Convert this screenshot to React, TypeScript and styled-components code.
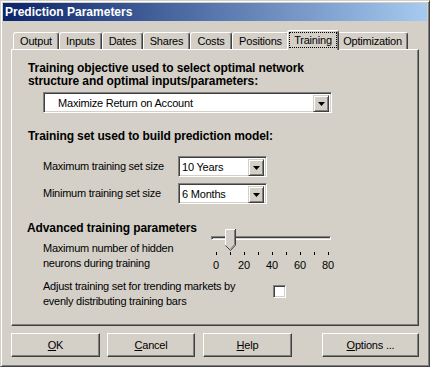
import React from 'react'
import styled, { createGlobalStyle } from 'styled-components'

const Global = createGlobalStyle`
  html, body {
    margin: 0;
    padding: 0;
    background: #D4D0C8;
  }
  body {
    font-family: "Liberation Sans", Arial, sans-serif;
    font-size: 11px;
    color: #000;
  }
`

const TABS = [
  { label: 'Output', w: 46 },
  { label: 'Inputs', w: 43 },
  { label: 'Dates', w: 41 },
  { label: 'Shares', w: 47 },
  { label: 'Costs', w: 42 },
  { label: 'Positions', w: 57 },
  { label: 'Training', w: 48, active: true },
  { label: 'Optimization', w: 71 },
]

const App: React.FC = () => {
  return (
    <>
      <Global />
      <StyledWindow>
        <StyledTitleBar>Prediction Parameters</StyledTitleBar>
        <StyledBody>
          <StyledTabStrip>
            {TABS.map((tab) =>
              tab.active ? (
                <StyledActiveTab key={tab.label} $w={tab.w}>
                  <StyledFocus>{tab.label}</StyledFocus>
                </StyledActiveTab>
              ) : (
                <StyledTab key={tab.label} $w={tab.w}>
                  {tab.label}
                </StyledTab>
              ),
            )}
          </StyledTabStrip>
          <StyledPanel>
            <StyledHeading>
              Training objective used to select optimal network
              <br />
              structure and optimal inputs/parameters:
            </StyledHeading>
            <StyledWideCombo>
              <Dropdown width={289} indent={12} text="Maximize Return on Account" />
            </StyledWideCombo>

            <StyledHeading $mt={17}>Training set used to build prediction model:</StyledHeading>
            <StyledSizeRow $mt={13}>
              <StyledLabel $w={135}>Maximum training set size</StyledLabel>
              <Dropdown width={89} indent={1} text="10 Years" />
            </StyledSizeRow>
            <StyledSizeRow $mt={6}>
              <StyledLabel $w={135}>Minimum training set size</StyledLabel>
              <Dropdown width={89} indent={1} text="6 Months" />
            </StyledSizeRow>

            <StyledAdvanced>
              <StyledAdvancedLeft>
                <StyledHeading $ml={-1}>Advanced training parameters</StyledHeading>
                <StyledMultiLabel>
                  Maximum number of hidden
                  <br />
                  neurons during training
                </StyledMultiLabel>
              </StyledAdvancedLeft>
              <Slider value={10} />
            </StyledAdvanced>

            <StyledCheckRow>
              <StyledCheckLabel>
                Adjust training set for trending markets by
                <br />
                evenly distributing training bars
              </StyledCheckLabel>
              <StyledCheckbox />
            </StyledCheckRow>
          </StyledPanel>

          <StyledButtonRow>
            <StyledButton $w={89}>
              <u>O</u>K
            </StyledButton>
            <StyledButton $w={88} $ml={7}>
              <u>C</u>ancel
            </StyledButton>
            <StyledButton $w={89} $ml={8}>
              <u>H</u>elp
            </StyledButton>
            <StyledButton $w={97} $ml={30}>
              <u>O</u>ptions ...
            </StyledButton>
          </StyledButtonRow>
        </StyledBody>
      </StyledWindow>
    </>
  )
}

interface DropdownProps {
  width: number
  indent: number
  text: string
}

const Dropdown: React.FC<DropdownProps> = ({ width, indent, text }) => (
  <StyledCombo $w={width}>
    <StyledComboText $indent={indent}>{text}</StyledComboText>
    <StyledComboButton>
      <svg width="7" height="4" viewBox="0 0 7 4">
        <polygon points="0,0 7,0 3.5,4" fill="#000" />
      </svg>
    </StyledComboButton>
  </StyledCombo>
)

const Slider: React.FC<{ value: number }> = ({ value }) => {
  // 0..80 across the tick span
  const thumbLeft = 14 + (value / 80) * 112 - 5
  return (
    <StyledSlider>
      <StyledTrackArea>
        <StyledTrack />
        <StyledThumb style={{ left: thumbLeft }}>
          <svg width="11" height="22" viewBox="0 0 11 22">
            <polygon points="0.5,0.5 10.5,0.5 10.5,16 5.5,21.5 0.5,16" fill="#D4D0C8" />
            <polyline points="0.5,16 0.5,0.5 10,0.5" fill="none" stroke="#fff" strokeWidth="1" />
            <polyline points="10.5,0 10.5,16 5.5,21.5 0.5,16.5" fill="none" stroke="#404040" strokeWidth="1" />
            <polyline points="9.5,1 9.5,15.6 5.5,20" fill="none" stroke="#808080" strokeWidth="1" />
          </svg>
        </StyledThumb>
      </StyledTrackArea>
      <StyledTicks>
        {Array.from({ length: 9 }).map((_, i) => (
          <StyledTick key={i} />
        ))}
      </StyledTicks>
      <StyledTickLabels>
        {[0, 20, 40, 60, 80].map((n) => (
          <StyledTickLabel key={n}>{n}</StyledTickLabel>
        ))}
      </StyledTickLabels>
    </StyledSlider>
  )
}

const StyledWindow = styled.div`
  width: 430px;
  height: 367px;
  box-sizing: border-box;
  display: flex;
  flex-direction: column;
  background: #D4D0C8;
  border: 1px solid;
  border-color: #D4D0C8 #404040 #404040 #D4D0C8;
  box-shadow: inset 1px 1px #fff, inset -1px -1px #808080;
  padding: 2px;
`

const StyledTitleBar = styled.div`
  height: 18px;
  flex: none;
  display: flex;
  align-items: center;
  padding-left: 2px;
  background: linear-gradient(to right, #0A246A, #A6CAF0);
  color: #fff;
  font-weight: bold;
  font-size: 12px;
`

const StyledBody = styled.div`
  flex: 1;
  display: flex;
  flex-direction: column;
  padding: 9px 8px 7px;
`

const StyledTabStrip = styled.div`
  display: flex;
  align-items: flex-end;
  height: 19px;
  padding-left: 2px;
`

const StyledTab = styled.div<{ $w: number }>`
  width: ${(p) => p.$w}px;
  height: 17px;
  box-sizing: border-box;
  border-top: 1px solid #fff;
  border-left: 1px solid #fff;
  border-right: 1px solid #404040;
  border-radius: 3px 3px 0 0;
  box-shadow: inset -1px 0 #808080;
  padding-top: 2px;
  line-height: 13px;
  text-align: center;
  letter-spacing: -0.2px;
`

const StyledActiveTab = styled.div<{ $w: number }>`
  width: ${(p) => p.$w + 4}px;
  height: 20px;
  box-sizing: border-box;
  margin: 0 -2px -1px;
  position: relative;
  z-index: 1;
  background: #D4D0C8;
  border-top: 1px solid #fff;
  border-left: 1px solid #fff;
  border-right: 1px solid #404040;
  border-radius: 3px 3px 0 0;
  box-shadow: inset -1px 0 #808080;
  padding: 1px 1px 0 1px;
`

const StyledFocus = styled.div`
  height: 16px;
  box-sizing: border-box;
  border: 1px dotted #000;
  padding-top: 1px;
  line-height: 13px;
  text-align: center;
  letter-spacing: -0.2px;
`

const StyledPanel = styled.div`
  height: 277px;
  box-sizing: border-box;
  border: 1px solid;
  border-color: #fff #404040 #404040 #fff;
  box-shadow: inset -1px -1px #808080;
  padding: 12px 0 0 16px;
  display: flex;
  flex-direction: column;
  align-items: flex-start;
`

const StyledHeading = styled.div<{ $mt?: number; $ml?: number }>`
  margin-top: ${(p) => p.$mt || 0}px;
  margin-left: ${(p) => p.$ml || 0}px;
  font-size: 12px;
  font-weight: bold;
  line-height: 13px;
  letter-spacing: -0.1px;
  white-space: nowrap;
`

const StyledWideCombo = styled.div`
  margin: 4px 0 0 15px;
`

const StyledCombo = styled.div<{ $w: number }>`
  width: ${(p) => p.$w}px;
  height: 21px;
  box-sizing: border-box;
  display: flex;
  background: #fff;
  border: 1px solid;
  border-color: #808080 #fff #fff #808080;
  box-shadow: inset 1px 1px #404040, inset -1px -1px #D4D0C8;
  padding: 2px 2px 1px 2px;
`

const StyledComboText = styled.div<{ $indent: number }>`
  flex: 1;
  padding-left: ${(p) => p.$indent}px;
  font-size: 11px;
  line-height: 17px;
  letter-spacing: -0.2px;
  white-space: nowrap;
  overflow: hidden;
`

const StyledComboButton = styled.div`
  width: 16px;
  height: 17px;
  box-sizing: border-box;
  display: flex;
  align-items: center;
  justify-content: center;
  background: #D4D0C8;
  border: 1px solid;
  border-color: #D4D0C8 #404040 #404040 #D4D0C8;
  box-shadow: inset 1px 1px #fff, inset -1px -1px #808080;
`

const StyledSizeRow = styled.div<{ $mt: number }>`
  display: flex;
  align-items: center;
  margin-top: ${(p) => p.$mt}px;
  margin-left: 15px;
`

const StyledLabel = styled.div<{ $w: number }>`
  width: ${(p) => p.$w}px;
  font-size: 11px;
  line-height: 15px;
  letter-spacing: -0.25px;
`

const StyledAdvanced = styled.div`
  display: flex;
  margin-top: 18px;
`

const StyledAdvancedLeft = styled.div`
  width: 174px;
  display: flex;
  flex-direction: column;
`

const StyledMultiLabel = styled.div`
  margin: 6px 0 0 15px;
  font-size: 11px;
  line-height: 15px;
  letter-spacing: -0.25px;
  white-space: nowrap;
`

const StyledSlider = styled.div`
  width: 140px;
  padding-top: 7px;
  display: flex;
  flex-direction: column;
`

const StyledTrackArea = styled.div`
  position: relative;
  height: 22px;
  padding-top: 7px;
  box-sizing: border-box;
`

const StyledTrack = styled.div`
  margin-left: 9px;
  width: 120px;
  height: 4px;
  box-sizing: border-box;
  border: 1px solid;
  border-color: #808080 #fff #fff #808080;
  box-shadow: inset 1px 1px #404040, inset -1px -1px #D4D0C8;
`

const StyledThumb = styled.div`
  position: absolute;
  top: 0;
  width: 11px;
  height: 22px;
  line-height: 0;
`

const StyledTicks = styled.div`
  margin: 1px 0 0 14px;
  width: 113px;
  height: 3px;
  display: flex;
  justify-content: space-between;
`

const StyledTick = styled.div`
  width: 1px;
  height: 3px;
  background: #000;
`

const StyledTickLabels = styled.div`
  display: flex;
  margin-top: 3px;
`

const StyledTickLabel = styled.div`
  width: 28px;
  text-align: center;
  font-size: 11px;
  line-height: 15px;
`

const StyledCheckRow = styled.div`
  display: flex;
  align-items: flex-start;
  margin: 6px 0 0 15px;
`

const StyledCheckLabel = styled.div`
  width: 230px;
  font-size: 11px;
  line-height: 15px;
  letter-spacing: -0.25px;
  white-space: nowrap;
`

const StyledCheckbox = styled.div`
  width: 13px;
  height: 13px;
  box-sizing: border-box;
  margin-top: 6px;
  background: #fff;
  border: 1px solid;
  border-color: #808080 #fff #fff #808080;
  box-shadow: inset 1px 1px #404040, inset -1px -1px #D4D0C8;
`

const StyledButtonRow = styled.div`
  display: flex;
  margin-top: 7px;
`

const StyledButton = styled.div<{ $w: number; $ml?: number }>`
  width: ${(p) => p.$w}px;
  margin-left: ${(p) => p.$ml || 0}px;
  height: 24px;
  box-sizing: border-box;
  display: flex;
  align-items: center;
  justify-content: center;
  background: #D4D0C8;
  border: 1px solid;
  border-color: #fff #404040 #404040 #fff;
  box-shadow: inset -1px -1px #808080;
  font-size: 11px;
  letter-spacing: -0.2px;
  u {
    text-decoration: underline;
    text-underline-offset: 1px;
  }
`

export default App
